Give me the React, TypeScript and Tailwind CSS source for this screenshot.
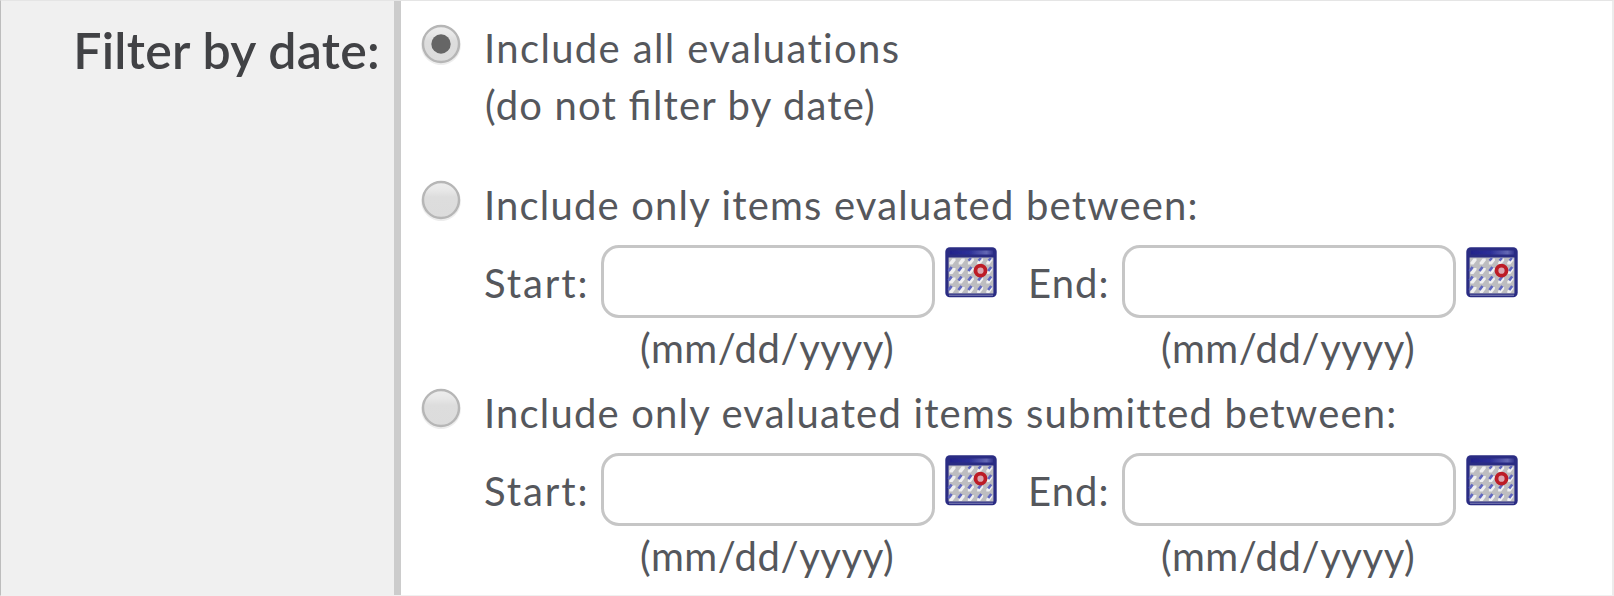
import type { ReactNode } from "react";

function Radio({ checked = false, name }: { checked?: boolean; name: string }) {
  return (
    <svg width="42" height="42" viewBox="0 0 42 42" role="radio" aria-checked={checked} aria-label={name}>
      <defs>
        <linearGradient id="radioFill" x1="0" y1="0" x2="0" y2="1">
          <stop offset="0" stopColor="#eeeeee" />
          <stop offset="0.22" stopColor="#e8e8e8" />
          <stop offset="0.42" stopColor="#dddddd" />
          <stop offset="1" stopColor="#dcdcdc" />
        </linearGradient>
      </defs>
      <circle cx="21" cy="22.3" r="18.6" fill="none" stroke="#000" strokeOpacity="0.07" strokeWidth="2.5" />
      <circle cx="21" cy="21" r="18" fill="url(#radioFill)" stroke="#b6b6b6" strokeWidth="2.4" />
      {checked && <circle cx="21" cy="21" r="9.7" fill="#666666" />}
    </svg>
  );
}

const columns = [0, 1, 2, 3, 4];
const rows = [0, 1, 2, 3];

function CalendarIcon() {
  return (
    <svg width="52" height="51" viewBox="0 0 52 51" aria-hidden="true">
      <defs>
        <linearGradient id="calBar" x1="0" y1="0" x2="1" y2="0">
          <stop offset="0" stopColor="#23238a" />
          <stop offset="0.45" stopColor="#2c2f97" />
          <stop offset="0.85" stopColor="#6468b4" />
          <stop offset="1" stopColor="#34368f" />
        </linearGradient>
        <filter id="calSoft" x="-5%" y="-5%" width="110%" height="110%">
          <feGaussianBlur stdDeviation="0.7" />
        </filter>
      </defs>
      <rect x="0.3" y="0.3" width="51.4" height="50" rx="4.5" fill="#2a2c83" />
      <g filter="url(#calSoft)">
        <rect x="5" y="3.5" width="43" height="4" fill="url(#calBar)" />
        <rect x="4" y="47.6" width="44" height="1.4" fill="#6a6ca8" />
        <rect x="3.6" y="10.5" width="44.8" height="36" fill="#bdbdc0" />
        {rows.map((r) =>
          columns.map((c) => (
            <path
              key={`${r}-${c}`}
              d={`M${4.5 + c * 9.2} ${17.5 + r * 9.5} v-2 l3 -4 h3 v2 l-3 4z`}
              fill="#f0f0f0"
            />
          )),
        )}
        {[0, 1, 2].map((r) =>
          columns.map((c) => (
            <path
              key={`${r}-${c}`}
              d={`M${3.6 + c * 9.9} ${24 + r * 9.5} l3 -4`}
              stroke="#5f66c0"
              strokeWidth="2.7"
            />
          )),
        )}
        <path d="M23.5 13.6l2.5-2.6M33.5 13.6l2.5-2.6M43.5 13.6l2.5-2.6" stroke="#5f66c0" strokeWidth="2.4" />
        <circle cx="35.5" cy="23.7" r="5" fill="#dba8b2" stroke="#bd1f28" strokeWidth="3.8" />
      </g>
    </svg>
  );
}

function DateField({ label, labelClass }: { label: string; labelClass: string }) {
  return (
    <div className="flex items-start">
      <span className={`${labelClass} shrink-0 pt-[10px]`}>{label}</span>
      <div className="flex w-[334px] flex-col">
        <input
          type="text"
          aria-label={label}
          className="h-[73px] w-[334px] rounded-[18px] border-3 border-[#c6c6c6] bg-white px-4 outline-none"
        />
        <span className="h-[65px] pt-[2px] pl-[39px] tracking-[0.55px]">(mm/dd/yyyy)</span>
      </div>
      <div className="ml-[10px] pt-[2px]">
        <CalendarIcon />
      </div>
    </div>
  );
}

function Option({ checked, name, children }: { checked?: boolean; name: string; children: ReactNode }) {
  return (
    <div className="flex items-start">
      <div className="w-[64px] shrink-0 pt-[3px]">
        <Radio checked={checked} name={name} />
      </div>
      <div>{children}</div>
    </div>
  );
}

function DateRange({ title }: { title: string }) {
  return (
    <Option name={title}>
      <p className="pt-px pb-[11px]">{title}</p>
      <div className="flex">
        <DateField label="Start:" labelClass="w-[117px] tracking-[1.9px]" />
        <div className="w-[31px]" />
        <DateField label="End:" labelClass="w-[94px] tracking-[1.1px]" />
      </div>
    </Option>
  );
}

export default function App() {
  return (
    <div className="flex h-[596px] w-[1614px] overflow-hidden border-t border-r-2 border-b border-l border-t-[#e5e5e5] border-r-[#ececec] border-b-[#f0f0f0] border-l-[#bdbdbd] bg-white font-['Lato',sans-serif]">
      <div className="w-[400px] shrink-0 border-r-[7px] border-[#cccccc] bg-[#f0f0f0] pt-[19px] pr-[14px] text-right text-[50px] leading-[60px] font-semibold tracking-[0.3px] text-[#414245]">
        Filter by date:
      </div>
      <div className="flex flex-col pt-[19px] pl-[19px] text-[40px] leading-[57px] tracking-[1.18px] whitespace-nowrap text-[#55575c]">
        <div className="h-[156px]">
          <Option checked name="Include all evaluations">
            <p className="tracking-[1.36px]">Include all evaluations</p>
            <p className="pl-px">
              (do not <span className="mr-[1.5px] tracking-normal">fi</span>lter by date)
            </p>
          </Option>
        </div>
        <div className="h-[208px]">
          <DateRange title="Include only items evaluated between:" />
        </div>
        <DateRange title="Include only evaluated items submitted between:" />
      </div>
    </div>
  );
}
